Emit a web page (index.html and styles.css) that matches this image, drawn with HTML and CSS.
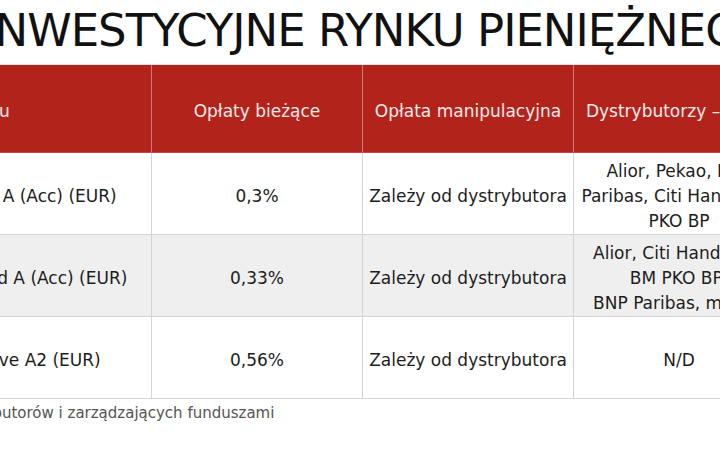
FILE: index.html
```html
<!DOCTYPE html>
<html lang="pl">
<head>
<meta charset="utf-8">
<title>Fundusze inwestycyjne rynku pieniężnego</title>
<link rel="stylesheet" href="styles.css">
</head>
<body>
<div class="page">
  <h1 class="title">FUNDUSZE INWESTYCYJNE RYNKU PIENIĘŻNEGO</h1>
  <div class="table">
    <div class="cell head first">Nazwa funduszu</div>
    <div class="cell head">Opłaty bieżące</div>
    <div class="cell head">Opłata manipulacyjna</div>
    <div class="cell head">Dystrybutorzy – banki</div>

    <div class="cell first">Amundi Euro Liquidity Fund A (Acc) (EUR)</div>
    <div class="cell">0,3%</div>
    <div class="cell">Zależy od dystrybutora</div>
    <div class="cell">Alior, Pekao, BNP<br>Paribas, Citi Handlowy,<br>PKO BP</div>

    <div class="cell alt first">BlackRock Euro Liquidity Fund A (Acc) (EUR)</div>
    <div class="cell alt">0,33%</div>
    <div class="cell alt">Zależy od dystrybutora</div>
    <div class="cell alt">Alior, Citi Handlowy,<br>BM PKO BP,<br>BNP Paribas, mBank</div>

    <div class="cell first">Pictet EUR Liquidity Reserve A2 (EUR)</div>
    <div class="cell">0,56%</div>
    <div class="cell">Zależy od dystrybutora</div>
    <div class="cell">N/D</div>
  </div>
  <p class="note">Źródło: dane dystrybutorów i zarządzających funduszami</p>
</div>
</body>
</html>
```
FILE: styles.css
```css
* { box-sizing: border-box; }
html, body { margin: 0; background: #fff; }
body {
  width: 720px;
  height: 449px;
  overflow: hidden;
  font-family: "DejaVu Sans", sans-serif;
  color: #1d1d1d;
}
.page {
  margin-left: -271px;
  width: 1055px;
}
.title {
  margin: 0;
  padding: 5px 17px 0 0;
  font-size: 45px;
  font-weight: 400;
  letter-spacing: -1px;
  line-height: 52px;
  text-align: center;
  white-space: nowrap;
  color: #111;
}
.table {
  margin-top: 7px;
  display: grid;
  grid-template-columns: 422px 211px 211px 211px;
  border-top: 1px solid #e3e3e3;
}
.cell {
  height: 82px;
  display: flex;
  align-items: center;
  justify-content: center;
  text-align: center;
  font-size: 17px;
  line-height: 25px;
  padding: 5px 6px 0;
  white-space: nowrap;
  border-bottom: 1px solid #d4d4d4;
  border-left: 1px solid #d4d4d4;
}
.cell.first { border-left: none; }
.head {
  height: 88px;
  background: #b2241b;
  color: #fbeae8;
  border-left-color: #d27a74;
  border-bottom-color: #c4463e;
}
.alt { background: #efefef; }
.note {
  margin: 4px 0 0;
  padding-left: 116px;
  font-size: 15px;
  line-height: 20px;
  color: #555;
  white-space: nowrap;
}
```
